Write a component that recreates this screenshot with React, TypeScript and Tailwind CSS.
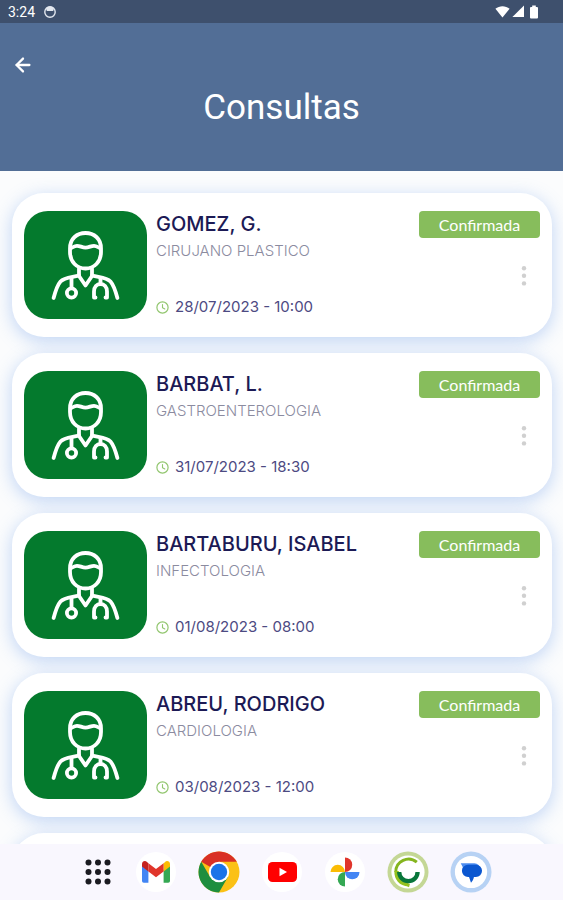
import { ArrowLeft } from "lucide-react";

interface Appointment {
  id: number;
  name: string;
  specialty: string;
  date: string;
  status: string;
}

const APPOINTMENTS: Appointment[] = [
  { id: 1, name: "GOMEZ, G.", specialty: "CIRUJANO PLASTICO", date: "28/07/2023 - 10:00", status: "Confirmada" },
  { id: 2, name: "BARBAT, L.", specialty: "GASTROENTEROLOGIA", date: "31/07/2023 - 18:30", status: "Confirmada" },
  { id: 3, name: "BARTABURU, ISABEL", specialty: "INFECTOLOGIA", date: "01/08/2023 - 08:00", status: "Confirmada" },
  { id: 4, name: "ABREU, RODRIGO", specialty: "CARDIOLOGIA", date: "03/08/2023 - 12:00", status: "Confirmada" },
];

const CARD = "rounded-[32px] bg-white shadow-[0_4px_18px_rgba(120,165,235,0.45)]";

function StatusBar() {
  return (
    <div className="flex h-[23px] shrink-0 items-center bg-[#3e506d] px-2 text-white">
      <span className="text-[14px] leading-4">3:24</span>
      <svg className="ml-2 size-3.5" viewBox="0 0 14 14" fill="none">
        <circle cx="7" cy="7" r="5.2" stroke="#e3e8f0" strokeWidth="1.4" />
        <path d="M3 3.4C5 1 9 1 11 3.4L10.2 6H3.8Z" fill="#e3e8f0" />
      </svg>
      <div className="ml-auto mr-4 flex items-center">
        <svg className="h-[13px] w-[15px]" viewBox="0 0 15 13" fill="currentColor">
          <path d="M7.5 12.4L.4 3.8C4.4.3 10.6.3 14.6 3.8Z" />
        </svg>
        <svg className="ml-0.5 size-[13px]" viewBox="0 0 13 13" fill="currentColor">
          <path d="M12 .6V12H.4Z" />
        </svg>
        <svg className="ml-1 h-[14px] w-[10px]" viewBox="0 0 10 14" fill="currentColor">
          <path d="M3.2.5h3.6V2H8a1 1 0 0 1 1 1v9.5a1 1 0 0 1-1 1H2a1 1 0 0 1-1-1V3a1 1 0 0 1 1-1h1.2Z" />
        </svg>
      </div>
    </div>
  );
}

function DoctorIcon() {
  return (
    <svg
      className="h-[72px] w-[70px]"
      viewBox="0 0 70 72"
      fill="none"
      stroke="#fff"
      strokeWidth="3.8"
      strokeLinecap="round"
      strokeLinejoin="round"
    >
      {/* head and cap */}
      <path d="M19 19.500C19 9.500 26 4 34.500 4S50 9.500 50 19.500v3.500C50 33 43 39.500 34.500 39.500S19 33 19 23Z" />
      <path d="M20 19c2.500-1.200 4-2.200 6-2.200 3 0 5 1.800 8.500 1.800s5.500-1.800 8.500-1.800c2 0 3.500 1 6 2.200" />
      {/* neck and collar */}
      <path d="M28 39.500v7.500L34.500 56.500l6.500-9.500V39.500" />
      {/* shoulders */}
      <path d="M28 46.500c-8 2-14.500 1.800-18.500 6C6 56.500 4.200 63 2.600 69" />
      <path d="M41 46.500c8 2 14.500 1.800 18.500 6 3.500 4 5.300 10.500 6.900 16.500" />
      {/* stethoscope */}
      <path d="M20.500 49v9.500M49.500 49v6" />
      <circle cx="20.500" cy="64" r="4.600" />
      <path d="M44.500 68.500H43V62.500c0-4.500 2.800-7.500 6.500-7.500s6.500 3 6.500 7.500v6H54.500" />
    </svg>
  );
}

function ClockIcon() {
  return (
    <svg className="size-[13px]" viewBox="0 0 13 13" fill="none" stroke="#92c66f" strokeLinecap="round">
      <circle cx="6.5" cy="6.5" r="5.6" strokeWidth="1.2" />
      <path d="M6.500 3.500v3.200l2.300 1.300" strokeWidth="1.1" />
    </svg>
  );
}

function AppointmentCard({ appointment }: { appointment: Appointment }) {
  return (
    <li className={`flex h-36 shrink-0 py-[18px] px-3 ${CARD}`}>
      <div className="flex w-[123px] shrink-0 items-center justify-center rounded-[24px] bg-[#047a2d]">
        <DoctorIcon />
      </div>
      <div className="ml-[9px] flex min-w-0 flex-1 flex-col">
        <h2 className="whitespace-nowrap text-[20px] leading-[26px] font-medium text-[#1c1a55]">{appointment.name}</h2>
        <p className="mt-1 whitespace-nowrap text-[15px] leading-5 font-light text-[#8b8b9f]">{appointment.specialty}</p>
        <p className="mt-auto mb-[2px] flex items-center gap-1.5 whitespace-nowrap text-[15px] leading-5 text-[#4d4a82]">
          <ClockIcon />
          {appointment.date}
        </p>
      </div>
      <div className="flex w-[121px] shrink-0 flex-col items-end">
        <span className="flex h-[27px] w-full items-center justify-center rounded-[4px] bg-[#87bd5c] font-[Lato,sans-serif] text-[16px] text-white">
          {appointment.status}
        </span>
        <button type="button" aria-label="Opciones" className="mt-6 mr-2 flex w-4 justify-center py-1">
          <svg className="h-5 w-1.5" viewBox="0 0 6 20" fill="#d0d0d0">
            <circle cx="3" cy="2.2" r="2.2" />
            <circle cx="3" cy="9.8" r="2.2" />
            <circle cx="3" cy="17.4" r="2.2" />
          </svg>
        </button>
      </div>
    </li>
  );
}

function Dock() {
  return (
    <nav className="flex h-14 shrink-0 items-center justify-center gap-[21px] bg-[#f9f7fe] pl-2.5">
      <button type="button" aria-label="Aplicaciones" className="flex h-10 w-[33px] items-center justify-center">
        <svg className="size-[26px]" viewBox="0 0 26 26" fill="#1b1b21">
          {[3.5, 13, 22.5].map((y) => [3.5, 13, 22.5].map((x) => <circle key={`${x}-${y}`} cx={x} cy={y} r="3" />))}
        </svg>
      </button>
      <button type="button" aria-label="Gmail" className="mx-px flex size-10 items-center justify-center rounded-full bg-white">
        <svg className="h-[22px] w-7" viewBox="0 0 28 22">
          <path d="M0 3.500V20a1.800 1.800 0 0 0 1.800 1.800H6.400V9Z" fill="#4285f4" />
          <path d="M28 3.500V20a1.800 1.800 0 0 1-1.800 1.800H21.600V9Z" fill="#34a853" />
          <path d="M21.600 2.500V10.500L28 5.600V3c0-2.700-3-3.800-5-2.100Z" fill="#fbbc04" />
          <path d="M6.400 10.500V2.300L14 8l7.600-5.700v8.200L14 16.200Z" fill="#e0352b" />
          <path d="M0 3v2.600l6.400 4.900V2.300L5 .9C3-.8 0 .3 0 3Z" fill="#c5221f" />
        </svg>
      </button>
      <button type="button" aria-label="Chrome" className="flex size-[42px] items-center justify-center">
        <svg className="size-[42px]" viewBox="0 0 42 42">
          <circle cx="21" cy="21" r="20.5" fill="#fbc116" />
          <path d="M21 21L3.250 10.750A20.500 20.500 0 0 1 38.750 10.750H21Z" fill="#d93025" />
          <path d="M3.250 10.750L12.120 26.120 21 21 29.900 26.120 21 41.500A20.500 20.500 0 0 1 3.250 10.750Z" fill="#1e8e3e" />
          <circle cx="21" cy="21" r="10.25" fill="#fff" />
          <circle cx="21" cy="21" r="8.2" fill="#1a73e8" />
        </svg>
      </button>
      <button type="button" aria-label="YouTube" className="mx-px flex size-10 items-center justify-center rounded-full bg-white">
        <svg className="h-5 w-[29px]" viewBox="0 0 29 20">
          <rect width="29" height="20" rx="4.5" fill="#f00" />
          <path d="M11.500 5.800v8.400L19 10Z" fill="#fff" />
        </svg>
      </button>
      <button type="button" aria-label="Fotos" className="mx-px flex size-10 items-center justify-center rounded-full bg-white">
        <svg className="size-[30px]" viewBox="0 0 30 30">
          <path d="M15 15V.5a7.250 7.250 0 0 1 0 14.500Z" fill="#e0352b" />
          <path d="M15 15H29.500a7.250 7.250 0 0 1-14.500 0Z" fill="#4285f4" />
          <path d="M15 15V29.500a7.250 7.250 0 0 1 0-14.500Z" fill="#34a853" />
          <path d="M15 15H.5a7.250 7.250 0 0 1 14.500 0Z" fill="#fbbc04" />
        </svg>
      </button>
      <button type="button" aria-label="Consultas" className="flex size-[42px] items-center justify-center">
        <svg className="size-[42px]" viewBox="0 0 43 43" fill="none">
          <circle cx="21.5" cy="21.5" r="21" fill="#c4d795" />
          <circle cx="21.5" cy="21.5" r="17" fill="#fff" />
          <path d="M30.500 11.500A13 13 0 0 0 9 21.500" stroke="#85b51e" strokeWidth="3" />
          <path d="M9.800 20.500C9.500 28 14 33.500 22 34" stroke="#94c11f" strokeWidth="4.5" />
          <path d="M17 33.500h6.500L22.500 37Z" fill="#94c11f" />
          <path d="M12.500 21.500a9.200 9.200 0 0 0 18.800 0" stroke="#08763a" strokeWidth="4.4" />
        </svg>
      </button>
      <button type="button" aria-label="Mensajes" className="flex size-[42px] items-center justify-center">
        <svg className="size-[42px]" viewBox="0 0 43 43">
          <circle cx="21.5" cy="21.5" r="21" fill="#b7d2f4" />
          <circle cx="21.5" cy="21.5" r="16.5" fill="#fff" />
          <path d="M11 12.500H25a6 6 0 0 1 6 6v2H13V16.500Z" fill="#4d8df0" />
          <path d="M18.500 14h8a6.300 6.300 0 0 1 0 12.600H24.500C24 29 23 31 21.500 32.500L19.500 26.600H18.500a6.300 6.300 0 0 1 0-12.600Z" fill="#0b57d0" />
        </svg>
      </button>
    </nav>
  );
}

export default function App() {
  return (
    <div className="flex h-screen flex-col overflow-hidden bg-[#fbfcfd] font-[Roboto,sans-serif]">
      <StatusBar />
      <header className="h-[148px] shrink-0 bg-[#526e96] px-[13px] pt-8 text-white">
        <button type="button" aria-label="Volver" className="flex size-5 items-center justify-center">
          <ArrowLeft className="size-[22px] shrink-0" strokeWidth={2.5} />
        </button>
        <h1 className="mt-[13px] text-center text-[35px] leading-10">Consultas</h1>
      </header>
      <main className="min-h-0 flex-1 overflow-hidden pr-[11px] pl-3 pt-[22px] font-[Inter,sans-serif]">
        <ul className="flex flex-col gap-4">
          {APPOINTMENTS.map((a) => (
            <AppointmentCard key={a.id} appointment={a} />
          ))}
          <li aria-hidden="true" className={`h-36 shrink-0 ${CARD}`} />
        </ul>
      </main>
      <Dock />
    </div>
  );
}
